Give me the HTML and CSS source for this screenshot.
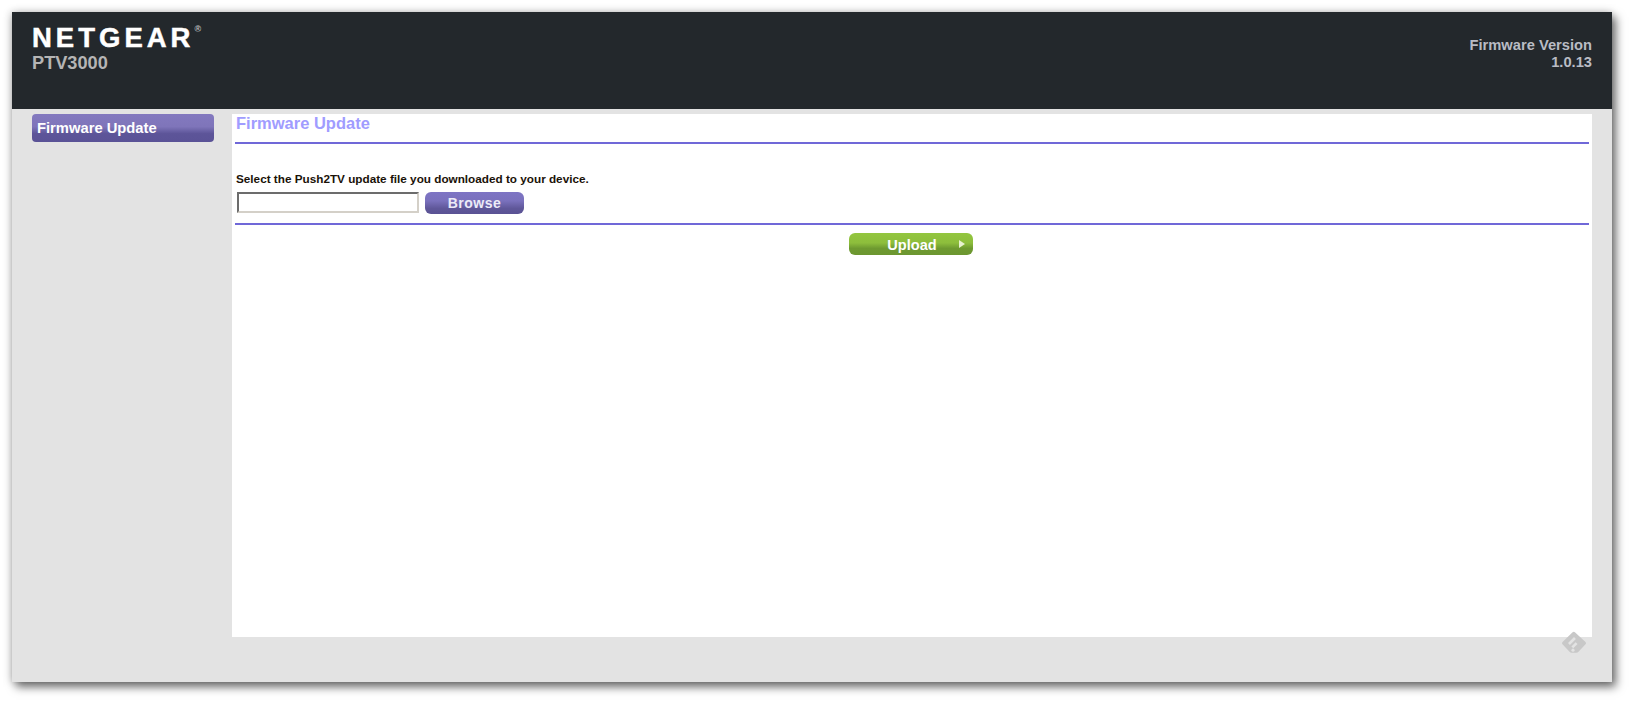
FILE: index.html
```html
<!DOCTYPE html>
<html lang="en">
<head>
<meta charset="utf-8">
<title>NETGEAR PTV3000</title>
<link rel="stylesheet" href="styles.css">
</head>
<body>
<div class="window">
  <header class="header">
    <div class="brand">
      <div class="logo"><span>NETGEAR</span><span class="reg">®</span></div>
      <div class="model">PTV3000</div>
    </div>
    <div class="version">Firmware Version<br>1.0.13</div>
  </header>
  <div class="main">
    <nav class="side">
      <div class="nav-item">Firmware Update</div>
    </nav>
    <section class="panel">
      <h1 class="title">Firmware Update</h1>
      <div class="form">
        <div class="label">Select the Push2TV update file you downloaded to your device.</div>
        <div class="file-row">
          <div class="file-input"></div>
          <div class="btn browse">Browse</div>
        </div>
      </div>
      <div class="actions">
        <div class="btn upload"><span>Upload</span><i class="arrow"></i></div>
      </div>
    </section>
  </div>
  <svg class="feedly" viewBox="0 0 26 24" width="26" height="24" aria-hidden="true">
    <path d="M11.3 1.6a2 2 0 0 1 2.9 0l10.3 9.3a1.6 1.6 0 0 1 0 2.3l-7 7.6a3 3 0 0 1-2.2 1h-4.6a3 3 0 0 1-2.2-1l-7-7.6a1.6 1.6 0 0 1 0-2.3z" fill="#c8c8c8"/>
    <path d="M7 12 13 6l1.9 1.9-6 6zM10.4 15.4l4.2-4.2 1.9 1.9-4.2 4.2z" fill="#e3e3e3"/>
    <circle cx="12" cy="19.2" r="1.6" fill="#e3e3e3"/>
  </svg>
</div>
</body>
</html>
```
FILE: styles.css
```css
html, body { margin: 0; padding: 0; background: #fff; }
body { height: 701px; overflow: hidden; font-family: "Liberation Sans", Arial, sans-serif; }
.window {
  position: relative;
  margin: 12px 20px 0 12px;
  width: 1600px;
  height: 670px;
  background: #e3e3e3;
  box-shadow: 4px 5px 9px rgba(0,0,0,.55), -1px 0 8px rgba(0,0,0,.22);
}
.header {
  height: 97px;
  background: #23282c;
  display: flex;
  justify-content: space-between;
  box-sizing: border-box;
  padding: 0 20px;
}
.logo {
  display: flex;
  margin-top: 11px;
  color: #fff;
  font-weight: 700;
  font-size: 27.5px;
  line-height: 30px;
  letter-spacing: 4px;
  white-space: nowrap;
  -webkit-text-stroke: .5px #fff;
}
.reg { font-size: 9px; line-height: 12px; letter-spacing: 0; color: #bbb; font-weight: 700; -webkit-text-stroke: 0; }
.model { color: #b5b5b5; font-weight: 700; font-size: 18.2px; line-height: 20px; }
.version {
  margin-top: 25px;
  color: #b9bcc4;
  font-weight: 700;
  font-size: 14.7px;
  line-height: 17px;
  text-align: right;
}
.main { display: flex; padding-top: 5px; }
.side { width: 220px; padding-left: 20px; box-sizing: border-box; }
.nav-item {
  width: 182px;
  height: 28px;
  box-sizing: border-box;
  padding-left: 5px;
  border-radius: 4px;
  background: linear-gradient(#8379bf 0%, #7f75ba 45%, #5d5599 70%, #5a5296 100%);
  color: #fff;
  font-weight: 700;
  font-size: 14.75px;
  line-height: 28px;
}
.panel {
  width: 1360px;
  height: 523px;
  background: #fff;
  box-sizing: border-box;
  padding: 0 3px;
}
.title {
  margin: 0;
  height: 30px;
  box-sizing: border-box;
  padding-left: 1px;
  border-bottom: 2px solid #7068d8;
  color: #a09cff;
  font-size: 16.5px;
  font-weight: 700;
  line-height: 19px;
}
.form {
  height: 81px;
  box-sizing: border-box;
  padding-left: 1px;
  border-bottom: 2px solid #7068d8;
}
.label {
  padding-top: 28px;
  color: #1a1208;
  font-size: 11.74px;
  font-weight: 700;
  line-height: 14px;
}
.file-row { display: flex; gap: 6px; margin-top: 6px; margin-left: 1px; }
.file-input {
  width: 182px;
  height: 21px;
  box-sizing: border-box;
  border: 2px solid;
  border-color: #6c6c6c #d4d0c8 #d4d0c8 #6c6c6c;
  background: #fff;
}
.btn {
  color: #fff;
  font-weight: 700;
  text-align: center;
  border-radius: 6px;
}
.browse {
  width: 99px;
  height: 22px;
  background: linear-gradient(#7d74c4 0%, #7a71bd 40%, #5f5799 75%, #5a5294 100%);
  color: #ecebf7;
  font-size: 14px;
  line-height: 22px;
  letter-spacing: .5px;
}
.actions { display: flex; justify-content: center; padding-top: 8px; padding-right: 2px; }
.upload {
  width: 124px;
  height: 22px;
  box-sizing: border-box;
  position: relative;
  background: linear-gradient(#93c63f 0%, #8dbe3c 45%, #6e9a30 70%, #6c9630 100%);
  font-size: 14.6px;
  line-height: 24px;
  padding-left: 2px;
}
.arrow {
  position: absolute;
  right: 8px;
  top: 7px;
  width: 0;
  height: 0;
  border-left: 6px solid #e8f2d0;
  border-top: 4px solid transparent;
  border-bottom: 4px solid transparent;
}
.feedly { position: absolute; left: 1549px; top: 619px; }
```
